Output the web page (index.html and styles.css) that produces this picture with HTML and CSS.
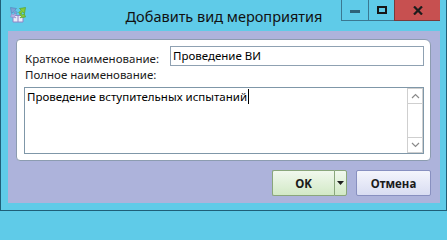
FILE: index.html
```html
<!DOCTYPE html>
<html lang="ru">
<head>
<meta charset="utf-8">
<title>Добавить вид мероприятия</title>
<link rel="stylesheet" href="styles.css">
</head>
<body>
<div class="window">
  <div class="titlebar">
    <div class="app-icon">
      <svg width="16" height="16" viewBox="0 0 16 16">
        <path d="M3 8.5 L13 8.5 L13 15 L3 15 Z" fill="#ecebf8" stroke="#8e86c8" stroke-width="1"/>
        <path d="M8 8.5 L8 15" stroke="#8e86c8" stroke-width="1"/>
        <path d="M0.5 0.5 L6.5 1.5 L4.8 3.2 L7.2 5.6 L5.6 7.2 L3.2 4.8 L1.5 6.5 Z" fill="#7aa4d6" stroke="#4f7db8" stroke-width="0.6"/>
        <path d="M15.5 0.5 L14.5 6.5 L12.8 4.8 L10.4 7.2 L8.8 5.6 L11.2 3.2 L9.5 1.5 Z" fill="#86cc3c" stroke="#4e9a1c" stroke-width="0.6"/>
        <path d="M15.5 10 L10 10.8 L11.5 9.3 L9.8 7.6 L11 6.4 L12.7 8.1 L14.2 6.6 Z" fill="#86cc3c" stroke="#4e9a1c" stroke-width="0.6"/>
        <path d="M0.5 10 L6 10.8 L4.5 9.3 L6.2 7.6 L5 6.4 L3.3 8.1 L1.8 6.6 Z" fill="#b6b2e2" stroke="#8e86c8" stroke-width="0.6"/>
      </svg>
    </div>
    <div class="title">Добавить вид мероприятия</div>
    <div class="caption-buttons">
      <div class="cap-btn cap-min"><span class="min-glyph"></span></div>
      <div class="cap-btn cap-max"><span class="max-glyph"></span></div>
      <div class="cap-btn cap-close">
        <svg width="10" height="9" viewBox="0 0 10 9"><path d="M1 0.5 L9 8.5 M9 0.5 L1 8.5" stroke="#1c1c1c" stroke-width="2.2"/></svg>
      </div>
    </div>
  </div>
  <div class="client">
    <div class="panel">
      <div class="row-short">
        <span class="label">Краткое наименование:</span>
        <div class="input">Проведение ВИ</div>
      </div>
      <div class="label label-full">Полное наименование:</div>
      <div class="memo">
        <div class="memo-text"><span class="caret-text">Проведение вступительных испытаний</span></div>
        <div class="scrollbar">
          <div class="sb-btn">
            <svg width="9" height="6" viewBox="0 0 9 6"><path d="M1 5 L4.5 1.5 L8 5" fill="none" stroke="#8a8a8a" stroke-width="1.2"/></svg>
          </div>
          <div class="sb-track"></div>
          <div class="sb-btn">
            <svg width="9" height="6" viewBox="0 0 9 6"><path d="M1 1 L4.5 4.5 L8 1" fill="none" stroke="#8a8a8a" stroke-width="1.2"/></svg>
          </div>
        </div>
      </div>
    </div>
    <div class="buttons">
      <div class="btn-split">
        <div class="btn btn-ok">OK</div>
        <div class="btn-drop">
          <svg width="7" height="4" viewBox="0 0 7 4"><path d="M0 0 L7 0 L3.5 4 Z" fill="#1e1e1e"/></svg>
        </div>
      </div>
      <div class="btn btn-cancel">Отмена</div>
    </div>
  </div>
</div>
</body>
</html>
```
FILE: styles.css
```css
html {
  margin: 0;
  padding: 0;
  background: #5fcbe8;
}
body {
  margin: 0;
  padding: 0;
  width: 447px;
  font-family: "Noto Sans", "Open Sans", sans-serif;
  background: #5fcbe8;
}
.window {
  box-sizing: border-box;
  width: 447px;
  height: 211px;
  background: #5fcbe8;
  border: 1px solid #1f5f78;
  border-top: none;
  padding: 0 6px 7px 7px;
  display: flex;
  flex-direction: column;
}
.titlebar {
  height: 31px;
  flex: none;
  display: grid;
  grid-template-columns: 1fr auto 1fr;
  align-items: start;
}
.app-icon {
  padding: 7px 0 0 2px;
  height: 16px;
}
.app-icon svg {
  display: block;
}
.title {
  font-size: 14.5px;
  color: #111;
  line-height: 18px;
  padding-top: 7px;
}
.caption-buttons {
  justify-self: end;
  display: flex;
  height: 21px;
}
.cap-btn {
  box-sizing: border-box;
  height: 21px;
  display: flex;
  align-items: center;
  justify-content: center;
  border-bottom: 1px solid #3a7891;
  border-left: 1px solid #3a7891;
}
.cap-min {
  width: 27px;
}
.cap-max {
  width: 26px;
}
.cap-close {
  width: 46px;
  background: #c75050;
  border-color: #7a3a3a;
}
.min-glyph {
  display: block;
  width: 10px;
  height: 3px;
  background: #2e6279;
  margin-top: 2px;
}
.max-glyph {
  display: block;
  box-sizing: border-box;
  width: 10px;
  height: 8px;
  border: 2px solid #161616;
}
.client {
  flex: 1;
  min-height: 0;
  background: #adb3db;
  display: flex;
  flex-direction: column;
  padding: 8px 9px 7px 8px;
}
.panel {
  box-sizing: border-box;
  height: 122px;
  flex: none;
  background: #ffffff;
  border: 1px solid #8c9cb0;
  border-radius: 4px 6px 4px 4px;
  padding: 6px 6px 6px 7px;
  display: flex;
  flex-direction: column;
}
.row-short {
  display: flex;
  align-items: center;
  height: 20px;
}
.label {
  font-size: 11.5px;
  color: #1a1a1a;
  line-height: 14px;
  padding-left: 1px;
}
.row-short .label {
  width: 145px;
  margin-top: 5px;
}
.input {
  box-sizing: border-box;
  flex: 1;
  height: 20px;
  border: 1px solid #8fa1b2;
  font-size: 11.5px;
  line-height: 17px;
  padding-left: 2px;
  color: #000;
}
.label-full {
  margin-top: 2px;
  height: 19px;
  line-height: 14px;
}
.memo {
  box-sizing: border-box;
  height: 68px;
  border: 1px solid #7f97a8;
  display: flex;
}
.memo-text {
  flex: 1;
  font-size: 11.5px;
  line-height: 15px;
  padding: 1px 0 0 2px;
  color: #000;
}
.caret-text {
  border-right: 1px solid #000;
  padding-right: 1px;
}
.scrollbar {
  width: 16px;
  display: flex;
  flex-direction: column;
  background: #fff;
}
.sb-btn {
  box-sizing: border-box;
  height: 16px;
  border: 1px solid #cfcfcf;
  display: flex;
  align-items: center;
  justify-content: center;
}
.sb-track {
  flex: 1;
  border-left: 1px solid #cfcfcf;
  border-right: 1px solid #cfcfcf;
}
.buttons {
  display: flex;
  justify-content: flex-end;
  gap: 9px;
  margin-top: 9px;
}
.btn-split {
  display: flex;
}
.btn {
  box-sizing: border-box;
  height: 26px;
  display: flex;
  align-items: center;
  justify-content: center;
  font-size: 11.5px;
  font-weight: bold;
  color: #1a1a1a;
}
.btn-ok {
  width: 62px;
  border: 1px solid #8aa67c;
  border-right: none;
  border-radius: 2px 0 0 2px;
  background: linear-gradient(#f1f8ee, #d2e9c6);
}
.btn-drop {
  box-sizing: border-box;
  width: 13px;
  height: 26px;
  border: 1px solid #8aa67c;
  border-radius: 0 2px 2px 0;
  background: linear-gradient(#f1f8ee, #d2e9c6);
  display: flex;
  align-items: center;
  justify-content: center;
}
.btn-cancel {
  width: 75px;
  border: 1px solid #8890c0;
  border-radius: 2px;
  background: linear-gradient(#f4f5fc, #d9ddf2);
}
```
